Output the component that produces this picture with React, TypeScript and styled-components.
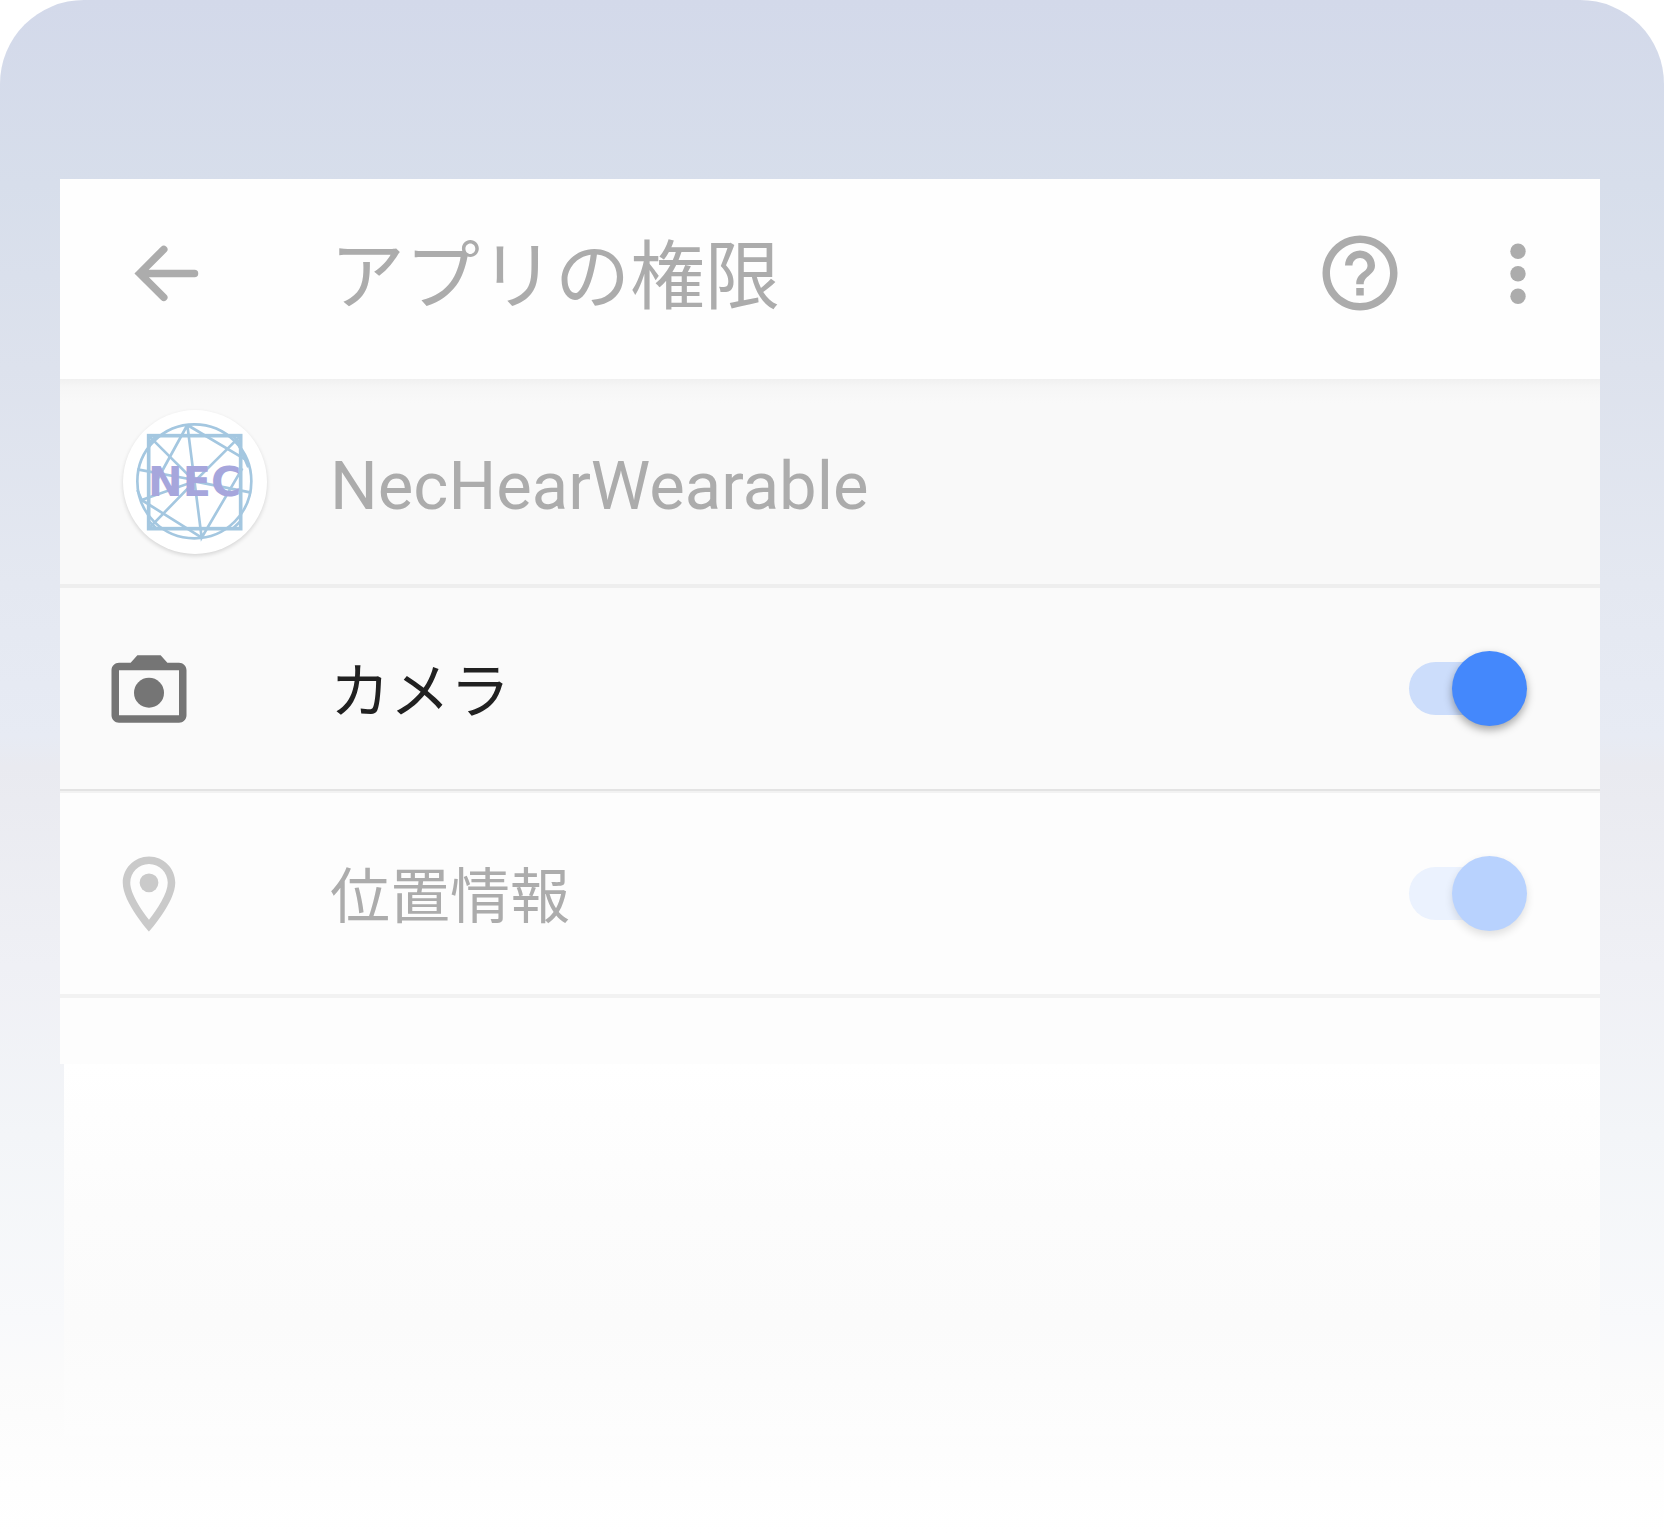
import React from "react";
import styled, { createGlobalStyle } from "styled-components";

const GlobalStyle = createGlobalStyle`
  *, *::before, *::after { box-sizing: border-box; }
  body {
    margin: 0;
    background: #ffffff;
    font-family: Roboto, "Noto Sans CJK JP", sans-serif;
  }
`;

const Page = styled.main`
  min-height: 100vh;
  padding: 179px 64px 96px 60px;
  border-radius: 84px 84px 0 0;
  background: linear-gradient(
    180deg,
    #d3d9ea 0%,
    #d7deeb 12%,
    #dde2ed 24%,
    #e4e8f1 38%,
    #e7ebf4 48%,
    #e9eaf0 50%,
    #eff0f5 63%,
    #f3f5f8 74%,
    #f8f9fb 86%,
    #fbfbfb 90%,
    #fefefe 97%,
    #ffffff 100%
  );
`;

const Header = styled.header`
  display: flex;
  align-items: center;
  min-height: 200px;
  padding-right: 37px;
  background: #fefefe;
`;

const Lead = styled.div<{ $inset: number }>`
  display: flex;
  flex: 0 0 270px;
  padding-left: ${(p) => p.$inset}px;
`;

const Title = styled.h1`
  flex: 1;
  margin: 0;
  padding-bottom: 4px;
  color: #acacac;
  font-size: 75px;
  font-weight: 400;
  line-height: 96px;
`;

const Actions = styled.div`
  display: flex;
  gap: 68px;
`;

const IconButton = styled.button`
  display: flex;
  padding: 0 0 12px;
  border: 0;
  background: none;
  color: #acacac;
  cursor: pointer;
`;

const Glyph = styled.svg<{ $color?: string }>`
  display: block;
  width: 90px;
  height: 90px;
  fill: currentColor;
  color: ${(p) => p.$color ?? "inherit"};
`;

const AppRow = styled.section`
  display: flex;
  align-items: center;
  min-height: 209px;
  border-bottom: 4px solid #eeeeee;
  background: linear-gradient(180deg, #f0f0f0 0, #f6f6f6 8px, #f9f9f9 24px);
`;

const AppName = styled.h2`
  margin: 0;
  padding-top: 8px;
  color: #acacac;
  font-size: 67px;
  font-weight: 400;
  line-height: 80px;
`;

const Avatar = styled.svg`
  display: block;
  width: 144px;
  height: 144px;
  border-radius: 50%;
  background: #ffffff;
  box-shadow: 0 2px 4px rgba(0, 0, 0, 0.14);
`;

const List = styled.ul`
  margin: 0;
  padding: 0 0 66px;
  list-style: none;
  background: #fdfdfd;
`;

const Item = styled.li<{ $active: boolean }>`
  display: flex;
  align-items: center;
  min-height: 203px;
  padding-right: 73px;
  border-bottom: ${(p) => (p.$active ? "2px solid #e3e3e3" : "4px solid #f2f2f2")};
  background: ${(p) => (p.$active ? "#fafafa" : "#fdfdfd")};

  & + & {
    min-height: 207px;
    border-top: 2px solid #f2f2f2;
  }
`;

const Label = styled.label<{ $active: boolean }>`
  flex: 1;
  padding-top: 8px;
  color: ${(p) => (p.$active ? "#212121" : "#acacac")};
  font-size: 60px;
  line-height: 72px;
`;

const Switch = styled.input<{ $active: boolean }>`
  appearance: none;
  display: grid;
  align-items: center;
  width: 118px;
  height: 75px;
  margin: 0;
  cursor: pointer;

  &::before,
  &::after {
    content: "";
    grid-area: 1 / 1;
  }

  &::before {
    width: 104px;
    height: 53px;
    border-radius: 27px;
    background: ${(p) => (p.$active ? "#ccddfb" : "#ebf2fe")};
  }

  &::after {
    width: 75px;
    height: 75px;
    border-radius: 50%;
    background: ${(p) => (p.$active ? "#4488fc" : "#b8d2fe")};
    box-shadow: 0 4px 8px rgba(0, 0, 0, ${(p) => (p.$active ? 0.34 : 0.12)});
  }

  &:checked::after {
    justify-self: end;
  }
`;

const Fade = styled.div`
  height: 372px;
  margin-left: 4px;
  background: linear-gradient(180deg, #ffffff 0%, #fcfcfc 40%, #fbfbfb 70%, #fdfdfd 100%);
`;

function BackIcon() {
  return (
    <Glyph viewBox="0 0 24 24" aria-hidden="true">
      <path
        d="M11.4 5.7 5 12.1l6.4 6.4M5.2 12.1h14.4"
        fill="none"
        stroke="currentColor"
        strokeWidth="2"
        strokeLinecap="round"
      />
    </Glyph>
  );
}

function HelpIcon() {
  return (
    <Glyph viewBox="0 0 24 24" aria-hidden="true">
      <path d="M11 18h2v-2h-2v2zm1-16C6.48 2 2 6.48 2 12s4.48 10 10 10 10-4.48 10-10S17.52 2 12 2zm0 18c-4.41 0-8-3.59-8-8s3.59-8 8-8 8 3.59 8 8-3.59 8-8 8zm0-14c-2.21 0-4 1.79-4 4h2c0-1.1.9-2 2-2s2 .9 2 2c0 2-3 1.75-3 5h2c0-2.25 3-2.5 3-5 0-2.21-1.79-4-4-4z" />
    </Glyph>
  );
}

function MoreIcon() {
  return (
    <Glyph viewBox="0 0 24 24" aria-hidden="true">
      <circle cx="12" cy="6.2" r="2.05" />
      <circle cx="12" cy="12.2" r="2.05" />
      <circle cx="12" cy="18.2" r="2.05" />
    </Glyph>
  );
}

function CameraIcon() {
  return (
    <Glyph viewBox="0 0 24 24" $color="#757575" aria-hidden="true">
      <path
        fillRule="evenodd"
        d="M8.9 3 7.1 5H4c-1.1 0-2 .9-2 2v12c0 1.1.9 2 2 2h16c1.1 0 2-.9 2-2V7c0-1.1-.9-2-2-2h-3.1l-1.8-2zM4 7h16v12H4z"
      />
      <circle cx="12" cy="13" r="4" />
    </Glyph>
  );
}

function PlaceIcon() {
  return (
    <Glyph viewBox="0 0 24 24" $color="#cacaca" aria-hidden="true">
      <path d="M12 2C8.13 2 5 5.13 5 9c0 5.25 7 13 7 13s7-7.75 7-13c0-3.87-3.13-7-7-7zM7 9c0-2.76 2.24-5 5-5s5 2.24 5 5c0 2.88-2.88 7.19-5 9.88C9.92 16.21 7 11.85 7 9z" />
      <circle cx="12" cy="9" r="2.5" />
    </Glyph>
  );
}

function AppLogo() {
  return (
    <Avatar viewBox="69 60 432 432" role="img" aria-label="NEC">
      <g fill="none" stroke="#a4c7e0" strokeWidth="8">
        <circle cx="283" cy="274" r="171" />
        <rect x="146" y="137" width="276" height="279" strokeWidth="11" />
        <path d="M262 105 305 443 427 235M262 105 442 212M454 308 284 274 125 330M262 105 165 282M125 330 305 443" />
        <path d="M146 137 284 274 422 137M146 416 284 274M112 238 284 270" />
        <path d="M146 160 170 137M398 137 422 160M146 393 170 416M398 416 422 393M410 150 445 232M125 330 112 300" />
      </g>
      <text
        x="284"
        y="318"
        textAnchor="middle"
        fill="#a6a6dc"
        fontFamily="'DejaVu Sans', sans-serif"
        fontWeight="700"
        fontSize="124"
      >
        NEC
      </text>
    </Avatar>
  );
}

const permissions = [
  { id: "camera", label: "カメラ", active: true, icon: <CameraIcon /> },
  { id: "location", label: "位置情報", active: false, icon: <PlaceIcon /> },
];

export default function App() {
  return (
    <>
      <GlobalStyle />
      <Page lang="ja">
        <Header>
          <Lead $inset={61}>
            <IconButton type="button" aria-label="戻る">
              <BackIcon />
            </IconButton>
          </Lead>
          <Title>アプリの権限</Title>
          <Actions>
            <IconButton type="button" aria-label="ヘルプ">
              <HelpIcon />
            </IconButton>
            <IconButton type="button" aria-label="その他">
              <MoreIcon />
            </IconButton>
          </Actions>
        </Header>
        <AppRow>
          <Lead $inset={63}>
            <AppLogo />
          </Lead>
          <AppName>NecHearWearable</AppName>
        </AppRow>
        <List>
          {permissions.map((p) => (
            <Item key={p.id} $active={p.active}>
              <Lead $inset={44}>{p.icon}</Lead>
              <Label htmlFor={p.id} $active={p.active}>
                {p.label}
              </Label>
              <Switch id={p.id} type="checkbox" role="switch" defaultChecked $active={p.active} />
            </Item>
          ))}
        </List>
        <Fade />
      </Page>
    </>
  );
}
